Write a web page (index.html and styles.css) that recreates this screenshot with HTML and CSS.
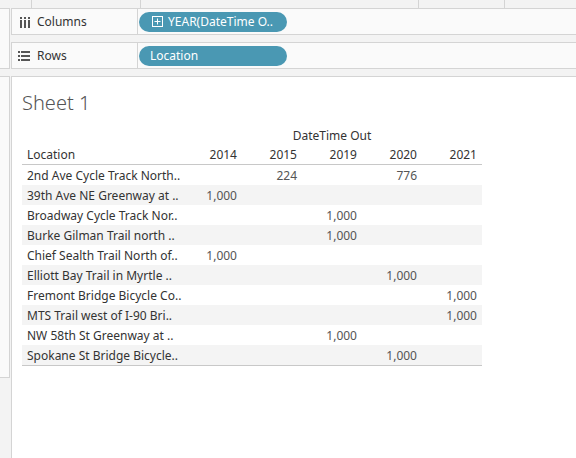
FILE: index.html
```html
<!DOCTYPE html>
<html>
<head>
<meta charset="utf-8">
<link rel="stylesheet" href="styles.css">
</head>
<body>
<div class="app">
  <div class="side">
    <div class="side-top"></div>
    <div class="side-box box1"></div>
    <div class="side-box box2"></div>
  </div>
  <div class="main">
    <div class="strip">
      <div class="cell c1"></div>
      <div class="cell c2"></div>
      <div class="cell c3"></div>
      <div class="cell c4"></div>
    </div>
    <div class="shelf">
      <div class="shelf-label">
        <svg class="ico" width="14" height="14" viewBox="0 0 14 14">
          <rect x="3" y="2" width="2" height="2" fill="#555"/>
          <rect x="7" y="2" width="2" height="2" fill="#555"/>
          <rect x="11" y="2" width="2" height="2" fill="#555"/>
          <rect x="3" y="5" width="2" height="8" fill="#555"/>
          <rect x="7" y="5" width="2" height="8" fill="#555"/>
          <rect x="11" y="5" width="2" height="8" fill="#555"/>
        </svg>
        <span>Columns</span>
      </div>
      <div class="shelf-body">
        <div class="pill">
          <svg class="pill-ico" width="11" height="11" viewBox="0 0 11 11">
            <rect x="0.5" y="0.5" width="10" height="10" fill="none" stroke="#fff" stroke-width="1"/>
            <rect x="5" y="2.5" width="1" height="6" fill="#fff"/>
            <rect x="2.5" y="5" width="6" height="1" fill="#fff"/>
          </svg>
          <span>YEAR(DateTime O..</span>
        </div>
      </div>
    </div>
    <div class="shelf">
      <div class="shelf-label">
        <svg class="ico" width="14" height="14" viewBox="0 0 14 14">
          <rect x="1" y="2" width="2" height="2" fill="#555"/>
          <rect x="4" y="2" width="9" height="2" fill="#555"/>
          <rect x="1" y="6" width="2" height="2" fill="#555"/>
          <rect x="4" y="6" width="9" height="2" fill="#555"/>
          <rect x="1" y="10" width="2" height="2" fill="#555"/>
          <rect x="4" y="10" width="9" height="2" fill="#555"/>
        </svg>
        <span>Rows</span>
      </div>
      <div class="shelf-body">
        <div class="pill pill-rows">
          <span>Location</span>
        </div>
      </div>
    </div>
    <div class="sheet">
      <div class="title">Sheet 1</div>
      <table class="grid">
        <colgroup>
          <col class="col-loc">
          <col class="col-num"><col class="col-num"><col class="col-num"><col class="col-num"><col class="col-num">
        </colgroup>
        <thead>
          <tr class="h1"><th></th><th colspan="5" class="group">DateTime Out</th></tr>
          <tr class="h2"><th class="loc">Location</th><th>2014</th><th>2015</th><th>2019</th><th>2020</th><th>2021</th></tr>
        </thead>
        <tbody>
          <tr><td class="loc">2nd Ave Cycle Track North..</td><td></td><td>224</td><td></td><td>776</td><td></td></tr>
          <tr class="alt"><td class="loc">39th Ave NE Greenway at ..</td><td>1,000</td><td></td><td></td><td></td><td></td></tr>
          <tr><td class="loc">Broadway Cycle Track Nor..</td><td></td><td></td><td>1,000</td><td></td><td></td></tr>
          <tr class="alt"><td class="loc">Burke Gilman Trail north ..</td><td></td><td></td><td>1,000</td><td></td><td></td></tr>
          <tr><td class="loc">Chief Sealth Trail North of..</td><td>1,000</td><td></td><td></td><td></td><td></td></tr>
          <tr class="alt"><td class="loc">Elliott Bay Trail in Myrtle ..</td><td></td><td></td><td></td><td>1,000</td><td></td></tr>
          <tr><td class="loc">Fremont Bridge Bicycle Co..</td><td></td><td></td><td></td><td></td><td>1,000</td></tr>
          <tr class="alt"><td class="loc">MTS Trail west of I-90 Bri..</td><td></td><td></td><td></td><td></td><td>1,000</td></tr>
          <tr><td class="loc">NW 58th St Greenway at ..</td><td></td><td></td><td>1,000</td><td></td><td></td></tr>
          <tr class="alt"><td class="loc">Spokane St Bridge Bicycle..</td><td></td><td></td><td></td><td>1,000</td><td></td></tr>
        </tbody>
      </table>
    </div>
  </div>
</div>
</body>
</html>
```

FILE: styles.css
```css
html, body {
  margin: 0;
  padding: 0;
}
body {
  background: #f3f3f3;
  font-family: "Noto Sans", "Open Sans", sans-serif;
  font-size: 12px;
  color: #333;
  width: 576px;
  height: 458px;
  overflow: hidden;
}
.app {
  display: flex;
  height: 458px;
}
.side {
  width: 10px;
  display: flex;
  flex-direction: column;
}
.side-top {
  height: 8px;
}
.side-box {
  background: #fafafa;
  border: 1px solid #d4d4d4;
  border-left: none;
  box-sizing: border-box;
}
.box1 {
  height: 61px;
}
.box2 {
  margin-top: 7px;
  height: 302px;
}
.main {
  flex: 1;
  margin-left: 1px;
  display: flex;
  flex-direction: column;
  min-width: 0;
}
.strip {
  height: 8px;
  display: flex;
}
.cell {
  border-right: 1px solid #d4d4d4;
  box-sizing: border-box;
  height: 8px;
}
.c1 { width: 21px; }
.c2 { width: 109px; }
.c3 { width: 278px; }
.c4 { width: 86px; }
.shelf {
  height: 27px;
  box-sizing: border-box;
  border: 1px solid #d4d4d4;
  border-right: none;
  background: #fafafa;
  display: flex;
  margin-bottom: 7px;
}
.shelf-label {
  width: 126px;
  box-sizing: border-box;
  border-right: 1px solid #d4d4d4;
  display: flex;
  align-items: center;
  padding-left: 5px;
  gap: 6px;
  color: #333;
  font-size: 12px;
}
.ico {
  display: block;
}
.shelf-body {
  flex: 1;
  display: flex;
  align-items: center;
  padding-left: 1px;
}
.pill {
  width: 148px;
  height: 20px;
  border-radius: 10px;
  background: #4a98b3;
  color: #fff;
  display: flex;
  align-items: center;
  padding-left: 13px;
  box-sizing: border-box;
  gap: 5px;
  font-size: 12px;
  white-space: nowrap;
}
.pill-ico {
  display: block;
}
.pill-rows {
  padding-left: 11px;
}
.sheet {
  flex: 1;
  background: #fff;
  border-left: 1px solid #d4d4d4;
  border-top: 1px solid #d4d4d4;
  padding: 14px 0 0 10px;
}
.title {
  font-size: 20px;
  color: #555;
  font-weight: 300;
  line-height: 24px;
  height: 24px;
}
.grid {
  margin-top: 10px;
  border-collapse: collapse;
  width: 460px;
  table-layout: fixed;
}
.col-loc {
  width: 160px;
}
.col-num {
  width: 60px;
}
.grid th, .grid td {
  padding: 0 5px 0 5px;
  height: 20px;
  text-align: right;
  white-space: nowrap;
  overflow: hidden;
  font-weight: normal;
}
.grid .loc {
  text-align: left;
  color: #333;
}
.grid td {
  color: #555;
}
.grid th {
  color: #333;
}
.grid .group {
  text-align: center;
}
.h2 th {
  height: 19px;
  border-bottom: 1px solid #c8c8c8;
}
.grid tbody tr:last-child td {
  border-bottom: 1px solid #c8c8c8;
}
.alt td {
  background: #f4f4f4;
}
```
